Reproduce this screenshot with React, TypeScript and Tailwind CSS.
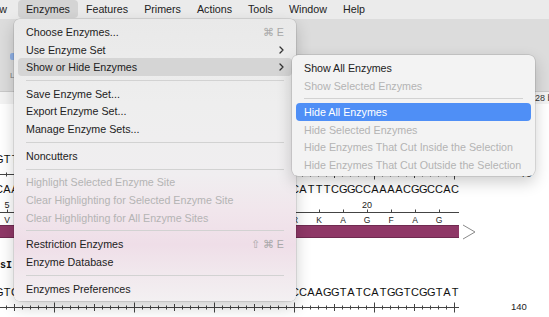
import React from 'react';

type Entry = { label: string; disabled?: boolean; keys?: string[]; sub?: boolean; active?: boolean } | null;

const enzymeMenu: Entry[] = [
  { label: 'Choose Enzymes...', keys: ['⌘', 'E'] },
  { label: 'Use Enzyme Set', sub: true },
  { label: 'Show or Hide Enzymes', sub: true, active: true },
  null,
  { label: 'Save Enzyme Set...' },
  { label: 'Export Enzyme Set...' },
  { label: 'Manage Enzyme Sets...' },
  null,
  { label: 'Noncutters' },
  null,
  { label: 'Highlight Selected Enzyme Site', disabled: true },
  { label: 'Clear Highlighting for Selected Enzyme Site', disabled: true },
  { label: 'Clear Highlighting for All Enzyme Sites', disabled: true },
  null,
  { label: 'Restriction Enzymes', keys: ['⇧', '⌘', 'E'] },
  { label: 'Enzyme Database' },
  null,
  { label: 'Enzymes Preferences' },
];

const showHideMenu: Entry[] = [
  { label: 'Show All Enzymes' },
  { label: 'Show Selected Enzymes', disabled: true },
  null,
  { label: 'Hide All Enzymes', active: true },
  { label: 'Hide Selected Enzymes', disabled: true },
  { label: 'Hide Enzymes That Cut Inside the Selection', disabled: true },
  { label: 'Hide Enzymes That Cut Outside the Selection', disabled: true },
];

const menuBar = ['View', 'Enzymes', 'Features', 'Primers', 'Actions', 'Tools', 'Window', 'Help'];

// sequence: 58 bases visible per line, 8px each, last base centred at x 455
const COMP: Record<string, string> = { A: 'T', T: 'A', G: 'C', C: 'G' };
const bottomStrand = 'CAA' + 'GGTCAGCTTGCCGATGGCAACGTTGCCAGTGCAT' + 'CATTTCGGCCAAAACGGCCAC';
const topStrand = bottomStrand.split('').map((c) => COMP[c]).join('');
const nextLine = 'GTC' + 'GGCATTACGCCGGTGAAACTGCTCAAGGCGTTCA' + 'CCAAGGTATCATGGTCGGTAT';
const aminos = 'VLGDAVRQTEILRKAGFAG';
const aaLabels: Record<number, string> = { 1: '5', 16: '10', 31: '15', 46: '20' };

const Chevron = () => (
  <svg width="5" height="8" viewBox="0 0 5 8" fill="none">
    <path d="M1 1l3 3-3 3" stroke="#333" strokeWidth="1.3" strokeLinecap="round" strokeLinejoin="round" />
  </svg>
);

function MenuList({ items, activeClass }: { items: Entry[]; activeClass: string }) {
  return (
    <>
      {items.map((it, i) =>
        it === null ? (
          <div key={i} className="h-[8.9px] flex items-center px-2">
            <div className="h-px w-full bg-[#d2d2d2]" />
          </div>
        ) : (
          <div
            key={i}
            className={`h-[17.7px] flex items-center justify-between px-2 rounded-[4px] whitespace-nowrap ${
              it.active ? activeClass : it.disabled ? 'text-[#b4b4b4]' : 'text-[#222]'
            }`}
          >
            <span>{it.label}</span>
            {it.keys && (
              <span className="flex gap-[3px] text-[#a8a8a8]">
                {it.keys.map((k) => (
                  <span key={k}>{k}</span>
                ))}
              </span>
            )}
            {it.sub && <Chevron />}
          </div>
        )
      )}
    </>
  );
}

const SeqRow = ({ seq }: { seq: string }) => (
  <div className="flex justify-end w-[459px] h-[10px] text-[11px] leading-[10px] text-[#111]">
    {seq.split('').map((c, i) => (
      <span key={i} className="w-[8px] shrink-0 text-center">
        {c}
      </span>
    ))}
  </div>
);

const Ruler = () => {
  const ticks = [];
  for (let k = 0; k < 58; k++) {
    const x = 454.5 - 8 * k;
    const len = k % 10 === 0 ? 5 : k % 5 === 0 ? 3.5 : 2;
    ticks.push(<line key={k} x1={x} x2={x} y1={10.5 - len} y2={10.5 + len} />);
  }
  return (
    <svg width="459" height="20" className="shrink-0" stroke="#444" strokeWidth="1">
      <line x1="0" x2="459" y1="10.5" y2="10.5" />
      {ticks}
    </svg>
  );
};

const RulerRow = ({ label, pad }: { label: string; pad: string }) => (
  <div className="flex items-center h-[20px]">
    <Ruler />
    <span className={`${pad} text-[9.5px] text-[#222]`}>{label}</span>
  </div>
);

export default function App() {
  const cells = Array.from({ length: 58 }, (_, i) => i);
  return (
    <div className="w-[549px] h-[317px] relative overflow-hidden bg-white font-['Liberation_Sans',Arial,sans-serif]">
      {/* menu bar */}
      <div className="h-[19px] bg-[#ebebeb] flex items-start text-[10.7px] text-[#222] whitespace-nowrap">
        <div className="flex ml-[-24px]">
          {menuBar.map((m) => (
            <div
              key={m}
              className={`h-[18px] flex items-center rounded-[4px] ${
                m === 'View' ? 'pl-[8px] pr-[11px]' : 'px-[8px]'
              } ${m === 'Enzymes' ? 'bg-[#d4d4d4]' : ''}`}
            >
              {m}
            </div>
          ))}
        </div>
      </div>

      {/* toolbar */}
      <div className="h-[72px] bg-[#dcdcdc] flex flex-col pl-[10px] pt-[34px]">
        <div className="w-[10px] h-[7px] rounded-[2px] bg-[#8fb1e6]" />
        <div className="mt-[12px] text-[8px] leading-[8px] text-[#7a7a7a]">Lin</div>
      </div>

      {/* info strip */}
      <div className="h-[13px] bg-[#f3f3f3] border-t border-[#c9c9c9] flex items-center">
        <div className="ml-auto w-[14px] overflow-hidden whitespace-nowrap text-[9px] leading-[12px] text-[#333]">
          28 bp
        </div>
      </div>

      {/* sequence view */}
      <div className="flex flex-col">
        <div className="h-[50px]" />
        <SeqRow seq={topStrand} />
        <RulerRow label="70" pad="pl-[62px]" />
        <SeqRow seq={bottomStrand} />
        <div className="flex justify-end items-end w-[459px] h-[18px] pb-[2px] text-[9px] leading-[9px] text-[#222]">
          {cells.map((i) => (
            <span key={i} className="w-[8px] shrink-0 flex justify-center whitespace-nowrap">
              {aaLabels[i] ?? ''}
            </span>
          ))}
        </div>
        <svg width="459" height="1" className="overflow-visible" stroke="#444" strokeWidth="1">
          <line x1="0" x2="459" y1="0.5" y2="0.5" />
          {aminos.split('').map((_, j) => {
            const x = 8 * (1 + 3 * j) - 0.5;
            return <line key={j} x1={x} x2={x} y1={-2.5} y2={0.5} />;
          })}
        </svg>
        <div className="flex justify-end w-[459px] h-[12px] text-[8.5px] leading-[14px] text-[#222]">
          {cells.map((i) => (
            <span key={i} className="w-[8px] shrink-0 text-center">
              {i % 3 === 1 ? aminos[(i - 1) / 3] : ''}
            </span>
          ))}
        </div>
        <div className="flex items-center h-[13px]">
          <div className="w-[459px] h-full bg-[#8f3867] border-y border-[#6f2a50]" />
          <svg width="14" height="16" viewBox="0 0 14 16" fill="none" className="ml-[3px] shrink-0">
            <path d="M1 1L13 8L1 15" stroke="#8a8a8a" strokeWidth="1" />
          </svg>
        </div>
        <div className="h-[23px]" />
        <div className="flex h-[10px]">
          <span className="w-[12px] flex justify-end whitespace-nowrap font-['Liberation_Mono',monospace] font-bold text-[10px] leading-[10px] text-[#111]">
            BbsI
          </span>
        </div>
        <div className="h-[16px]" />
        <SeqRow seq={nextLine} />
        <RulerRow label="140" pad="pl-[52px]" />
      </div>

      {/* Enzymes menu */}
      <div className="absolute top-[19px] left-[14px] w-[282px] px-1 py-1 rounded-[6px] text-[10.7px] bg-[linear-gradient(to_bottom,#e9e9e9_0%,#eeeeee_30%,#f0eef0_55%,#f1e6ec_68%,#efdee8_80%,#f1e8ed_90%,#f3f0f2_100%)] shadow-[0_6px_16px_rgba(0,0,0,0.2),0_0_0_0.5px_rgba(0,0,0,0.18)]">
        <MenuList items={enzymeMenu} activeClass="bg-[#d5d5d5] text-[#222]" />
      </div>

      {/* Show or Hide submenu */}
      <div className="absolute top-[55px] left-[292px] w-[243px] px-1 pt-1 pb-[2px] rounded-[6px] text-[10.7px] bg-[#f3f3f3] shadow-[0_6px_16px_rgba(0,0,0,0.2),0_0_0_0.5px_rgba(0,0,0,0.18)]">
        <MenuList items={showHideMenu} activeClass="bg-[#4f8ff6] text-white" />
      </div>
    </div>
  );
}
